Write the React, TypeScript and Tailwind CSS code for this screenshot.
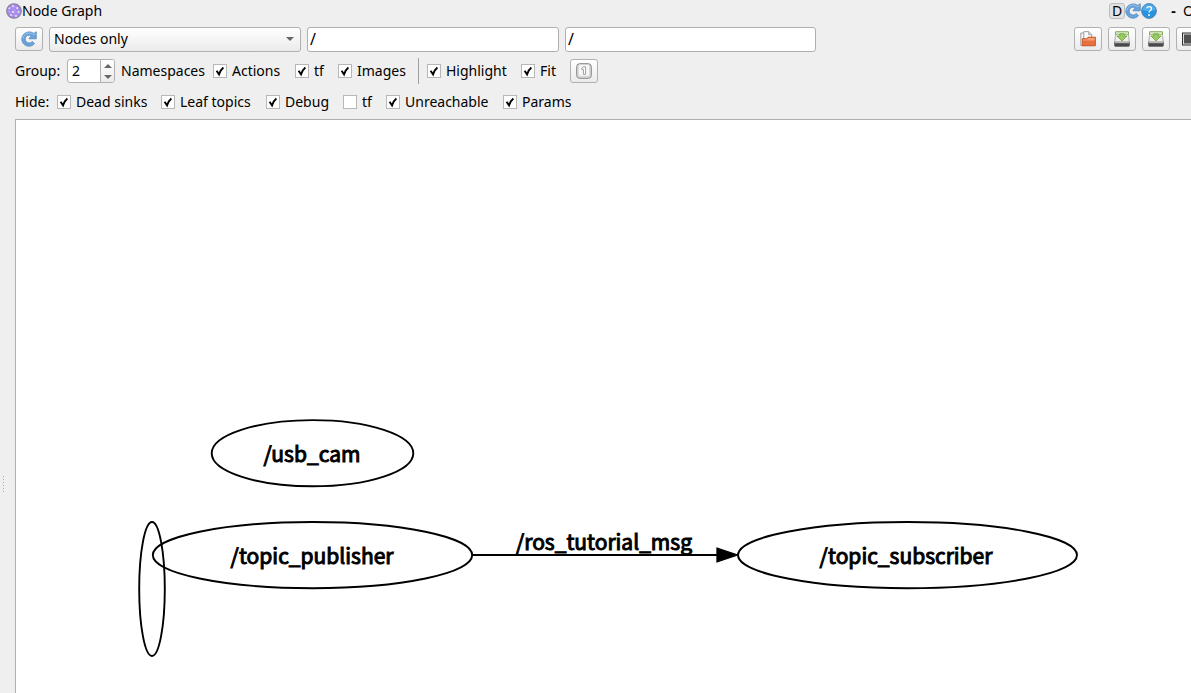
import { useId, useState, type ReactNode } from "react";

const buttonStyle =
  "grid h-6 w-7 shrink-0 place-items-center rounded-[3px] border border-[#b0b0b0] bg-linear-to-b from-white to-[#ebebeb]";
const fieldStyle =
  "h-[25px] min-w-0 rounded-[3px] border border-[#b0b0b0] outline-none";

function RefreshIcon() {
  return (
    <svg viewBox="0 0 16 16" className="size-4" aria-hidden="true">
      <path
        d="M8.4.9C4.2.9.8 4.1.8 8.1s3.2 7.1 7.2 7.1c2.3 0 4.2-.9 5.5-2.5l-2.2-2.3c-.8 1-1.9 1.5-3.2 1.5-2.2 0-3.9-1.7-3.9-3.8S5.9 4.2 8.2 4.2c.9 0 1.6.2 2.2.6L8 7.2v.6h7.3V.9h-.7l-1.7 1.6C11.7 1.4 10.1.9 8.4.9Z"
        fill="#6ba3d8"
        stroke="#4a84bf"
        strokeWidth="0.7"
        strokeLinejoin="round"
      />
      <path d="M2 7.5C2.4 4.3 4.9 2.1 8.2 2.1c2 0 3.4.7 4.7 1.9l1.4-1.2" fill="none" stroke="#9cc5ec" strokeWidth="0.9" />
    </svg>
  );
}

function GraphIcon() {
  return (
    <svg viewBox="0 0 16 16" className="size-4" aria-hidden="true">
      <circle cx="8" cy="8" r="7.3" fill="#a285ea" stroke="#8a8296" strokeWidth="1.1" />
      <path d="M3 5 7 3l4 2 2 4-3 4-5-1-3-4 5 1 4-4M7 3v6l3 4M7 9l6 0" fill="none" stroke="#bca9f2" strokeWidth="0.8" />
      <g fill="#ede8ff">
        <circle cx="7" cy="3" r="0.9" />
        <circle cx="3.4" cy="5.4" r="0.9" />
        <circle cx="11.2" cy="5" r="0.9" />
        <circle cx="7" cy="9" r="1" />
        <circle cx="12.7" cy="9" r="0.9" />
        <circle cx="5" cy="12" r="0.9" />
        <circle cx="10" cy="13" r="0.9" />
      </g>
    </svg>
  );
}

function HelpIcon() {
  return (
    <svg viewBox="0 0 16 16" className="size-4" aria-hidden="true">
      <circle cx="8" cy="8" r="7.4" fill="#2793df" stroke="#5f86a5" strokeWidth="1" />
      <path d="M1.5 7a6.6 6.6 0 0 1 13 0Q8 9 1.5 7Z" fill="#50aceb" />
      <path d="M5.7 5.2Q6.4 3.6 8.1 3.6 10.5 3.6 10.5 5.7C10.5 7.5 8 7.5 8 9.5" fill="none" stroke="#fff" strokeWidth="1.2" />
      <circle cx="8" cy="12" r="0.9" fill="#fff" />
    </svg>
  );
}

function FolderIcon() {
  return (
    <svg viewBox="0 0 16 16" className="size-4" aria-hidden="true">
      <path d="M.8 14.5V2H4.5V14.5Z" fill="#f1f1f1" stroke="#999" strokeWidth="0.9" />
      <path d="M3.8 9V.6H8.8L11.6 3.4V9Z" fill="#fafafa" stroke="#999" strokeWidth="0.9" />
      <path d="M8.6.8V3.6H11.4" fill="#ddd" stroke="#999" strokeWidth="0.8" />
      <path d="M2.3 14.8V7.7H6.6L8 6.2H15.4V14.8Z" fill="#e8703c" stroke="#c4501f" strokeWidth="0.9" />
      <path d="M3 8.5H7L8.4 7H14.7V9.6H3Z" fill="#f3a179" />
    </svg>
  );
}

function SaveIcon() {
  return (
    <svg viewBox="0 0 16 16" className="size-4" aria-hidden="true">
      <path d="M2 .7H14L15.5 11.5H.5Z" fill="#e2e2e2" stroke="#999" strokeWidth="0.7" />
      <path d="M2.8 3H13.2L14.2 10.8H1.8Z" fill="#f0f0f0" />
      <rect x=".5" y="11" width="15" height="4.4" rx="0.8" fill="#4a4a4a" stroke="#666" strokeWidth="0.7" />
      <path d="M.9 10.8H15.1V12.2H.9Z" fill="#b7b7b7" />
      <path d="M1.5.9H14.5V3.2H1.5Z" fill="#f5faef" stroke="#78ad42" strokeWidth="0.9" />
      <path d="M5.8 2.8H10.2V5H13L8 10 3 5H5.8Z" fill="#9aca63" stroke="#6fa637" strokeWidth="0.8" />
    </svg>
  );
}

function ImageIcon() {
  return (
    <svg viewBox="0 0 16 16" className="size-4" aria-hidden="true">
      <rect x=".5" y="2" width="15" height="12" fill="#ddd" stroke="#333" />
      <rect x="2" y="3.5" width="12" height="9" fill="#505050" />
    </svg>
  );
}

function ZoomOneIcon() {
  return (
    <svg viewBox="0 0 16 16" className="size-4" aria-hidden="true">
      <rect x=".7" y=".7" width="14.6" height="14.6" rx="3" fill="#dedede" stroke="#7c7c7c" strokeWidth="0.9" />
      <rect x="2.4" y="1.6" width="11.2" height="11.6" rx="2" fill="#f8f8f8" stroke="#c8c8c8" strokeWidth="0.6" />
      <path d="M5.7 5.2 7 3.9H9.6V11.3H7.4V6.4H5.7Z" fill="#fff" stroke="#888" strokeWidth="0.8" />
    </svg>
  );
}

function Check({ label, width, on = true }: { label: string; width: string; on?: boolean }) {
  const id = useId();
  return (
    <div className={`flex shrink-0 items-center gap-[5px] ${width}`}>
      <span className="grid size-[14px] shrink-0 place-items-center">
        <input
          id={id}
          type="checkbox"
          defaultChecked={on}
          className="peer col-start-1 row-start-1 size-[14px] appearance-none border border-[#b7b7b7] bg-white"
        />
        <svg viewBox="0 0 14 14" className="pointer-events-none invisible col-start-1 row-start-1 size-[14px] peer-checked:visible" aria-hidden="true">
          <path d="M3.6 6.8 6 10.4Q7.4 5.8 10.4 3.4" fill="none" stroke="#000" strokeWidth="1.9" />
        </svg>
      </span>
      <label htmlFor={id} className="whitespace-nowrap">{label}</label>
    </div>
  );
}

function IconButton({ label, children }: { label: string; children: ReactNode }) {
  return (
    <button type="button" aria-label={label} className={buttonStyle}>
      {children}
    </button>
  );
}

function Toolbar() {
  const [group, setGroup] = useState(2);
  return (
    <div className="flex flex-col pl-[15px]">
      <div className="flex h-[34px] items-center gap-1.5 overflow-hidden">
        <IconButton label="Refresh"><RefreshIcon /></IconButton>
        <div className="grid shrink-0 items-center">
          <select aria-label="Graph type" className={`${fieldStyle} col-start-1 row-start-1 w-[252px] appearance-none bg-linear-to-b from-white to-[#ebebeb] px-1`}>
            <option>Nodes only</option>
          </select>
          <svg viewBox="0 0 8 4" className="pointer-events-none col-start-1 row-start-1 mr-[7px] h-1 w-2 justify-self-end" aria-hidden="true">
            <path d="M0 0H8L4 4Z" fill="#666" />
          </svg>
        </div>
        <input aria-label="Node filter" defaultValue="/" className={`${fieldStyle} w-[252px] bg-white px-0.5 text-[16px]`} />
        <input aria-label="Topic filter" defaultValue="/" className={`${fieldStyle} w-[251px] bg-white px-0.5 text-[16px]`} />
        <div className="-mr-[13px] ml-auto flex shrink-0 gap-1.5">
          <IconButton label="Load graph"><FolderIcon /></IconButton>
          <IconButton label="Save as DOT"><SaveIcon /></IconButton>
          <IconButton label="Save as SVG"><SaveIcon /></IconButton>
          <IconButton label="Save as image"><ImageIcon /></IconButton>
        </div>
      </div>

      <div className="flex h-[30px] items-center">
        <label htmlFor="group" className="w-[52px]">Group:</label>
        <div className="flex h-6 w-12 overflow-hidden rounded-[3px] border border-[#b0b0b0] bg-white">
          <input
            id="group"
            value={group}
            onChange={(e) => setGroup(Number(e.target.value) || 0)}
            className="w-8 min-w-0 px-1 outline-none"
          />
          <div className="flex flex-1 flex-col border-l border-[#b0b0b0] bg-linear-to-b from-white to-[#ebebeb]">
            <button type="button" aria-label="Increase group" onClick={() => setGroup(group + 1)} className="grid flex-1 place-items-center">
              <svg viewBox="0 0 8 4" className="h-1 w-2" aria-hidden="true"><path d="M0 4H8L4 0Z" fill="#666" /></svg>
            </button>
            <button type="button" aria-label="Decrease group" onClick={() => setGroup(Math.max(0, group - 1))} className="grid flex-1 place-items-center">
              <svg viewBox="0 0 8 4" className="h-1 w-2" aria-hidden="true"><path d="M0 0H8L4 4Z" fill="#666" /></svg>
            </button>
          </div>
        </div>
        <span className="ml-1.5 w-[92px]">Namespaces</span>
        <Check label="Actions" width="w-[82px]" />
        <Check label="tf" width="w-[43px]" />
        <Check label="Images" width="w-[80px]" />
        <div className="mr-2 h-[26px] w-px bg-[#a0a0a0]" />
        <Check label="Highlight" width="w-[94px]" />
        <Check label="Fit" width="w-[49px]" />
        <IconButton label="Reset zoom"><ZoomOneIcon /></IconButton>
      </div>

      <div className="flex h-[33px] items-center pb-0.5">
        <span className="w-[42px]">Hide:</span>
        <Check label="Dead sinks" width="w-[104px]" />
        <Check label="Leaf topics" width="w-[105px]" />
        <Check label="Debug" width="w-[77px]" />
        <Check label="tf" width="w-[43px]" on={false} />
        <Check label="Unreachable" width="w-[117px]" />
        <Check label="Params" width="w-[80px]" />
      </div>
    </div>
  );
}

function Graph() {
  return (
    <svg
      width="1175"
      height="573"
      viewBox="16 120 1175 573"
      role="img"
      aria-label="Node graph"
      className="block max-w-none shrink-0"
    >
      <g fill="none" stroke="#000" strokeWidth="1.9">
        <ellipse cx="312.5" cy="453.2" rx="100.8" ry="33.1" />
        <ellipse cx="312.5" cy="555.1" rx="159.7" ry="33.1" />
        <ellipse cx="907.5" cy="555.1" rx="169.5" ry="33.1" />
        <ellipse cx="152" cy="589" rx="12.8" ry="67" />
        <path d="M472 555H718" />
      </g>
      <path d="M717 548.2 737.5 555 717 561.8Z" stroke="#000" strokeWidth="1.3" />
      <g className="text-[21px]" fontFamily='"Noto Sans CJK SC", sans-serif' textAnchor="middle" stroke="#000" strokeWidth="1">
        <text x="312" y="462">/usb_cam</text>
        <text x="312" y="564">/topic_publisher</text>
        <text x="604" y="550">/ros_tutorial_msg</text>
        <text x="906" y="564">/topic_subscriber</text>
      </g>
    </svg>
  );
}

export default function App() {
  return (
    <div className="flex min-h-screen flex-col overflow-hidden bg-[#efefef] font-['Noto_Sans',sans-serif] text-[14px] leading-5 text-black">
      <header className="flex h-[22px] items-center overflow-hidden pl-1.5">
        <GraphIcon />
        <h1>Node Graph</h1>
        <div className="-mr-1 ml-auto flex shrink-0 items-center">
          <button type="button" aria-label="Dock" className="flex size-4 items-center justify-center rounded-[3px] border border-[#bcbcbc] bg-[#e2e2e2] leading-4">D</button>
          <button type="button" aria-label="Reload"><RefreshIcon /></button>
          <button type="button" aria-label="Help"><HelpIcon /></button>
          <button type="button" aria-label="Minimize" className="ml-2.5 w-[13px] font-bold">-</button>
          <button type="button" aria-label="Close" className="ml-0.5 w-[13px]">O</button>
        </div>
      </header>
      <Toolbar />
      <main className="flex flex-1">
        <div className="flex w-[15px] shrink-0 items-center pl-[3px]">
          <div className="mt-[155px] flex flex-col gap-0.5">
            {[0, 1, 2, 3, 4, 5].map((dot) => (
              <span key={dot} className="size-px bg-[#aaa]" />
            ))}
          </div>
        </div>
        <div className="min-w-0 flex-1 overflow-hidden border-t border-l border-[#b0b0b0] bg-white">
          <Graph />
        </div>
      </main>
    </div>
  );
}
